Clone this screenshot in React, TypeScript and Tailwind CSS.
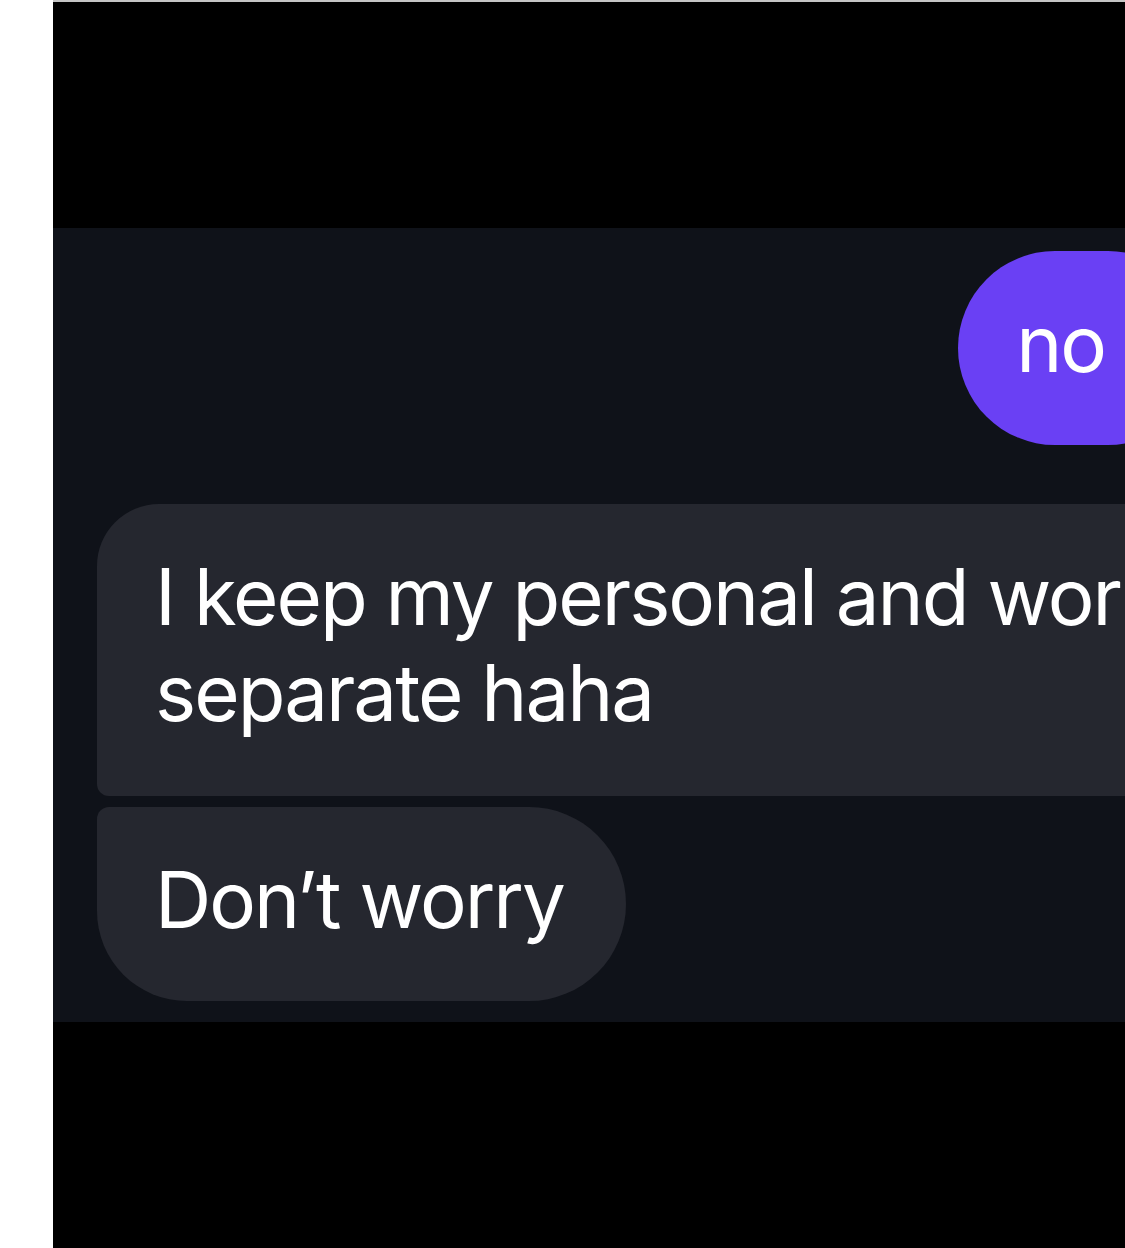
import React from 'react';

type Msg = {
    text: React.ReactNode;
    mine?: boolean;
    shape: string;
};

const messages: Msg[] = [
    { text: 'no', mine: true, shape: 'rounded-[97px] pr-[100px] pb-[53px]' },
    {
        text: (
            <>
                I keep my personal and work
                <br />
                separate haha
            </>
        ),
        shape: 'rounded-tl-[62px] rounded-bl-[12px] rounded-r-[62px] pr-[62px] pb-[55px]',
    },
    { text: 'Don\u2019t worry', shape: 'rounded-tl-[12px] rounded-bl-[90px] rounded-r-[97px] pr-[62px] pb-[53px]' },
];

const Bubble: React.FC<{ msg: Msg; className?: string }> = ({ msg, className = '' }) => (
    <div className={`flex ${msg.mine ? 'justify-end' : 'justify-start'} ${className}`}>
        <div
            className={`pl-[58px] pt-[45px] text-[78px] leading-[96px] tracking-[-2px] whitespace-nowrap text-white
                ${msg.mine ? 'bg-[#6a40f4]' : 'bg-[#25272f]'}
                ${msg.shape}`}
        >
            {msg.text}
        </div>
    </div>
);

export default function App() {
    return (
        <div className="flex w-[1125px] h-[1248px] overflow-hidden bg-white font-['Inter','Liberation_Sans',sans-serif]">
            {/* left white margin */}
            <div className="w-[53px] flex-shrink-0 bg-white" />

            <div className="flex-1 min-w-0 flex flex-col bg-black">
                <div className="h-[2px] bg-[#c4c4c4]" />
                <div className="h-[226px] bg-black" />

                {/* conversation panel, cropped on the right */}
                <div className="h-[794px] bg-[#0f1219] overflow-hidden">
                    <div className="w-[1196px] pl-[44px] pr-[44px] pt-[23px]">
                        <Bubble msg={messages[0]} />
                        <Bubble msg={messages[1]} className="mt-[59px]" />
                        <Bubble msg={messages[2]} className="mt-[11px]" />
                    </div>
                </div>

                <div className="flex-1 bg-black" />
            </div>
        </div>
    );
}
